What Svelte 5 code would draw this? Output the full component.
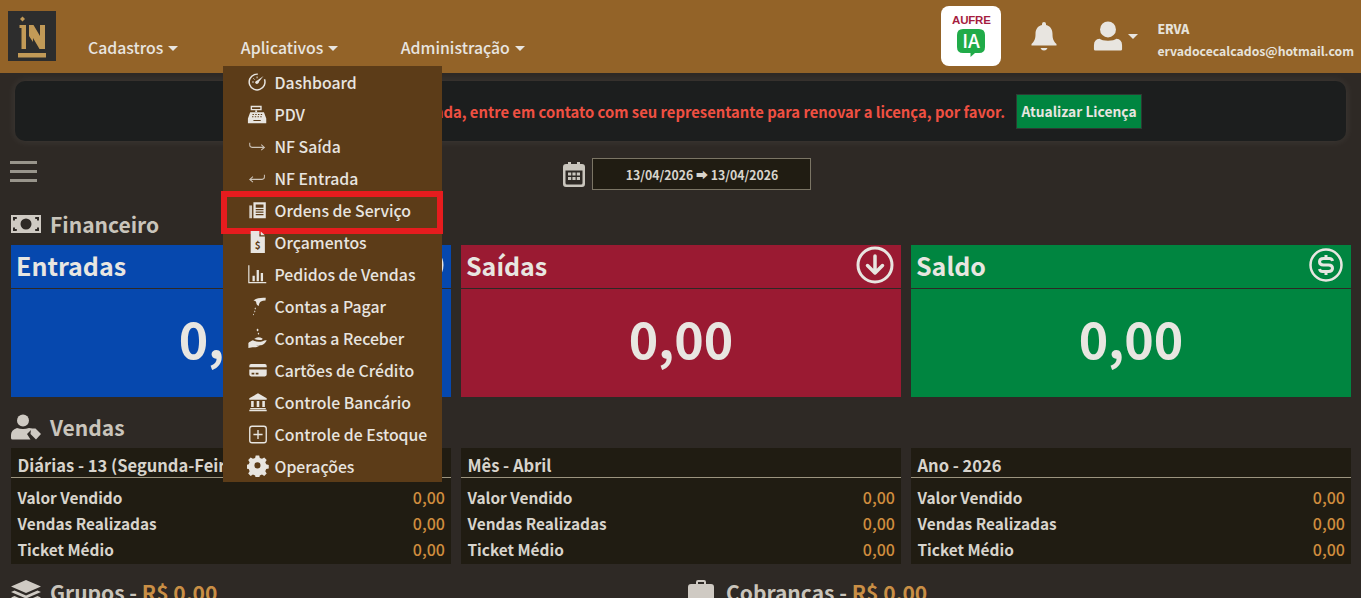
<script>
	const nav = ['Cadastros', 'Aplicativos', 'Administração'];

	const menu = [
		{ label: 'Dashboard', icon: '<circle cx="11" cy="12" r="8.6" fill="none" stroke="currentColor" stroke-width="1.6" stroke-dasharray="44 10" transform="rotate(-20 11 12)"/><path d="M10 11.2 18 5.5 12 13.2Z" fill="currentColor"/><circle cx="10.8" cy="12.4" r="1.8" fill="currentColor"/><path d="M5.5 12h2M11 6v2M7 8l1.3 1.3" stroke="currentColor" stroke-width="1"/>' },
		{ label: 'PDV', icon: '<path d="M4 3h12v5H4zM5.5 4.5v2h9v-2z" fill="currentColor" fill-rule="evenodd"/><path d="M9 8h2v2H9z" fill="currentColor"/><path d="M3.5 10h15l2.500 7v5H1v-5zM6 12v1h1.500v-1zM9 12v1h1.500v-1zM12 12v1h1.500v-1zM15 12v1h1.500v-1zM5.500 14.500v1H7v-1zM8.500 14.500v1H10v-1zM11.500 14.500v1H13v-1zM14.500 14.500v1H16v-1zM7 18.500v1.200h8v-1.200z" fill="currentColor" fill-rule="evenodd"/>' },
		{ label: 'NF Saída', icon: '<path d="M3 8.500v2.500q0 2.500 2.500 2.500H19M15.500 10.500l3.500 3-3.500 3" fill="none" stroke="currentColor" stroke-width="1.100" opacity=".8"/>' },
		{ label: 'NF Entrada', icon: '<path d="M19 8.500v2.500q0 2.500-2.500 2.500H3M6.500 10.500l-3.500 3 3.500 3" fill="none" stroke="currentColor" stroke-width="1.100" opacity=".8"/>' },
		{ label: 'Ordens de Serviço', icon: '<path d="M7 3.500h13.500v17.500H7zM9.500 6v3.500h8.500V6zM9.500 11v1.300h8.500V11zM9.500 13.700V15h8.500v-1.300zM9.500 16.400v1.300h8.500v-1.300z" fill="currentColor" fill-rule="evenodd"/><path d="M2.500 7h3v14h-3z" fill="currentColor" opacity=".85"/>' },
		{ label: 'Orçamentos', icon: '<path d="M4 0h9.500v6H19.500v18H4zM15 0.500 19.500 4.500H15z" fill="currentColor"/><text x="11.700" y="20" font-size="11" font-weight="700" text-anchor="middle" fill="#5c3c18" font-family="Noto Sans CJK SC, sans-serif">$</text>' },
		{ label: 'Pedidos de Vendas', icon: '<path d="M2 2.500v19h19" fill="none" stroke="currentColor" stroke-width="1.300"/><path d="M6 14h2.500v6H6zM10.500 7.500H13V20h-2.500zM15 11h2.500v9H15z" fill="currentColor"/>' },
		{ label: 'Contas a Pagar', icon: '<path d="M7 6c3-2.500 8-3.500 13.500-3l-.3 3c-2 .1-3.700.5-5 1.200-1.600 1-2 2.800-2.400 4.800-1.300-.4-2.300-1.500-2.600-3-.2-1.200-.5-2.600-3.200-3z" fill="currentColor"/><path d="M9 13.500q1.300 1.200 0 2.200-1.300-1 0-2.200zM8.500 17q1.100 1 0 2-1.100-1 0-2zM7 20.500q1 .8 0 1.700-1-.9 0-1.700z" fill="currentColor"/>' },
		{ label: 'Contas a Receber', icon: '<path d="M11.500 1.500l1.300 1.800-1.300 1.700-1.200-1.700zM12.500 6l.9 1.300-.9 1.200-.9-1.200z" fill="currentColor"/><path d="M8 13q3.500-3.500 9-.5l-.5 1.300q-4 1.200-8.500-.8z" fill="currentColor"/><path d="M6.500 14.500c3 1.800 7 2.200 10.500 1 1.700-.6 3-1.200 4.500-.8-1.500 3-3.800 4.800-6 5.300H10c1 .4 2.800.4 4 0-1 1.200-3 2-4.500 2H6L1.500 23v-5.500c1.500-1.500 3-2.200 5-3z" fill="currentColor"/>' },
		{ label: 'Cartões de Crédito', icon: '<path d="M4.500 5.500h15q2 0 2 2v1.500h-19v-1.500q0-2 2-2zM2.500 11.500h19v5.500q0 2-2 2h-15q-2 0-2-2zM5 15v1.800h3V15zM9.500 15v1.800h3V15z" fill="currentColor" fill-rule="evenodd"/>' },
		{ label: 'Controle Bancário', icon: '<path d="M12 2.500 21.500 8v1.500h-19V8zM4.500 11h2.800v6.500H4.500zM10.600 11h2.800v6.500h-2.800zM16.700 11h2.800v6.500h-2.800zM3.500 18.500h17V20h-17zM2.500 20.500h19V22h-19z" fill="currentColor"/>' },
		{ label: 'Controle de Estoque', icon: '<rect x="3" y="3.500" width="18" height="18" rx="2.500" fill="none" stroke="currentColor" stroke-width="1.500"/><path d="M12 7.500v10M7 12.500h10" stroke="currentColor" stroke-width="1.500"/>' },
		{ label: 'Operações', icon: '<path d="M10 1.500h4l.7 3 2.500 1 2.600-1.600 2.800 2.800-1.600 2.600 1 2.500 3 .7v4l-3 .7-1 2.500 1.600 2.600-2.800 2.800-2.600-1.600-2.500 1-.7 3h-4l-.7-3-2.500-1-2.600 1.600-2.800-2.800 1.600-2.600-1-2.500-3-.7v-4l3-.7 1-2.500-1.600-2.600 2.800-2.800 2.600 1.600 2.500-1zM12 9.500a3.500 3.500 0 1 0 0 7 3.500 3.500 0 0 0 0-7z" fill="currentColor" fill-rule="evenodd" transform="translate(0 -1) scale(.95)"/>' }
	];

	const cards = [
		{ title: 'Entradas', color: 'blue', icon: 'up' },
		{ title: 'Saídas', color: 'red', icon: 'down' },
		{ title: 'Saldo', color: 'green', icon: 'money' }
	];

	const periods = ['Diárias - 13 (Segunda-Feira)', 'Mês - Abril', 'Ano - 2026'];
	const rows = ['Valor Vendido', 'Vendas Realizadas', 'Ticket Médio'];
</script>

<div class="page">
	<header class="topbar">
		<div class="logo">
			<svg viewBox="0 0 48 50" width="48" height="50">
				<path d="M14.500 5.500 17 8l-2.500 2.500L12 8z" fill="#c29a57" />
				<path d="M11.500 14H18v24h-4.500V17h-2z" fill="#c29a57" />
				<path d="M21 14h4.500L32 25V14h5v24h-5.500L25 27v4l-4-6z" fill="#c29a57" />
				<path d="M10 42h28v4.500H10z" fill="#c29a57" />
			</svg>
		</div>
		<nav class="nav">
			{#each nav as item}
				<span class="nav-item">{item}<i class="caret"></i></span>
			{/each}
		</nav>
		<div class="tools">
			<div class="aufre">
				<span class="aufre-name">AUFRE</span>
				<svg viewBox="0 0 28 28" width="28" height="28">
					<path d="M6 0h16q6 0 6 6v12q0 6-6 6h-4l-4.500 4v-4H6q-6 0-6-6V6q0-6 6-6z" fill="#20ab49" />
					<text x="14" y="18.500" font-size="19" font-weight="500" text-anchor="middle" fill="#fff" font-family="Noto Sans CJK SC, sans-serif">IA</text>
				</svg>
			</div>
			<svg class="bell" viewBox="0 0 26 30" width="26" height="30">
				<path d="M13 1q2 0 2 2v1c4.500 1 6.500 4.500 6.500 9 0 5 1 7 4 10v1.500H.5V23c3-3 4-5 4-10 0-4.500 2-8 6.500-9V3q0-2 2-2zM9.500 27h7q-1 2.500-3.500 2.500T9.500 27z" fill="#e8e5e0" />
			</svg>
			<div class="user">
				<svg viewBox="0 0 32 32" width="32" height="30">
					<circle cx="16" cy="9" r="8.500" fill="#e8e5e0" />
					<path d="M7 19q2.500 2 9 2t9-2q6 .5 6 7v4q0 1.500-1.500 1.500h-27Q1 31.500 1 30v-4q0-6.500 6-7z" fill="#e8e5e0" />
				</svg>
				<i class="caret"></i>
			</div>
			<div class="account">
				<strong>ERVA</strong>
				<span>ervadocecalcados@hotmail.com</span>
			</div>
		</div>
	</header>

	<div class="banner-wrap">
		<div class="banner">
			<span class="warning">Sua licença está expirada, entre em contato com seu representante para renovar a licença, por favor.</span>
			<button class="renew">Atualizar Licença</button>
		</div>
	</div>

	<div class="filters">
		<div class="burger"><i></i><i></i><i></i></div>
		<div class="dates">
			<svg viewBox="0 0 22 26" width="22" height="26">
				<path d="M3 3h2V1h3v2h6V1h3v2h2q3 0 3 3v17q0 3-3 3H3q-3 0-3-3V6q0-3 3-3zM2.500 9.500V22q0 1.500 1.500 1.500h14q1.500 0 1.500-1.500V9.500z" fill="#c9c5bd" fill-rule="evenodd" />
				<path d="M5 11.500h3.200v3H5zM9.400 11.500h3.200v3H9.400zM13.800 11.500H17v3h-3.200zM5 16h3.200v3H5zM9.400 16h3.200v3H9.400zM13.800 16H17v3h-3.200z" fill="#c9c5bd" />
			</svg>
			<div class="date-box">13/04/2026 <span class="arrow">➡</span> 13/04/2026</div>
		</div>
	</div>

	<section class="section">
		<h2 class="section-title">
			<svg viewBox="0 0 30 18" width="30" height="18">
				<path d="M0 0h30v18H0zM15 3.500a5.500 5.500 0 1 0 0 11 5.500 5.500 0 0 0 0-11zM2 2v3.500h2V4h1.800V2zM24.200 2v2H26v1.500h2V2zM2 12.500V16h3.800v-2H4v-1.500zM26 12.500V14h-1.800v2H28v-3.500z" fill="#cfcac3" fill-rule="evenodd" />
			</svg>
			Financeiro
		</h2>
		<div class="grid">
			{#each cards as card}
				<div class="card {card.color}">
					<div class="card-head">
						<span>{card.title}</span>
						{#if card.icon === 'money'}
							<svg class="coin" viewBox="0 0 34 34" width="34" height="34">
								<circle cx="17" cy="17" r="15.500" fill="none" stroke="#e8e6e1" stroke-width="2.500" />
								<path d="M23.500 13q-.5-2.500-3-2.500h-6q-4 0-4 3.250t4 3.250h5q4 0 4 3.250t-4 3.250h-6q-2.500 0-3-2.500M17 7v3.500M17 23.500V27" fill="none" stroke="#e8e6e1" stroke-width="3" />
							</svg>
						{:else}
							<svg viewBox="0 0 38 38" width="38" height="38">
								<circle cx="19" cy="19" r="17" fill="none" stroke="#e8e6e1" stroke-width="3" />
								<path d="M19 10v17M11.500 19.500 19 27l7.500-7.500" fill="none" stroke="#e8e6e1" stroke-width="3.500" stroke-linecap="round" stroke-linejoin="round" />
							</svg>
						{/if}
					</div>
					<div class="card-value">0,00</div>
				</div>
			{/each}
		</div>
	</section>

	<section class="section sales">
		<h2 class="section-title">
			<svg viewBox="0 0 30 26" width="30" height="26">
				<circle cx="12" cy="6.500" r="6" fill="#cfcac3" />
				<path d="M6 14q6 2 12 0 2 0 3 1l-5 5 3.500 5.500H1.500Q0 25.500 0 24v-3q0-5 6-7z" fill="#cfcac3" />
				<path d="M20 14.500h4.500L30 20l-5 5.500-5.500-5.500z" fill="#cfcac3" />
			</svg>
			Vendas
		</h2>
		<div class="grid">
			{#each periods as period}
				<div class="panel">
					<div class="panel-head">{period}</div>
					<div class="panel-body">
						{#each rows as row}
							<div class="row"><span>{row}</span><em>0,00</em></div>
						{/each}
					</div>
				</div>
			{/each}
		</div>
	</section>

	<section class="totals">
		<h2 class="section-title">
			<svg viewBox="0 0 30 24" width="30" height="24">
				<path d="M15 0 30 6.500 15 13 0 6.500z" fill="#cfcac3" />
				<path d="M3.500 10.500 15 15.500l11.500-5L30 12 15 18.500 0 12zM3.500 16 15 21l11.500-5L30 17.500 15 24 0 17.500z" fill="#cfcac3" />
			</svg>
			<span>Grupos - <b>R$ 0,00</b></span>
		</h2>
		<h2 class="section-title charge">
			<svg viewBox="0 0 26 24" width="26" height="24">
				<path d="M8 4V2q0-2 2-2h6q2 0 2 2v2h5q3 0 3 3v14q0 3-3 3H3q-3 0-3-3V7q0-3 3-3zM10 2v2h6V2z" fill="#cfcac3" fill-rule="evenodd" />
			</svg>
			<span>Cobranças - <b>R$ 0,00</b></span>
		</h2>
	</section>

	<ul class="dropdown">
		{#each menu as entry}
			<li class:marked={entry.label === 'Ordens de Serviço'}>
				<svg viewBox="0 0 24 24" width="22" height="22">{@html entry.icon}</svg>
				{entry.label}
			</li>
		{/each}
	</ul>
</div>

<style>
	:global(body) {
		margin: 0;
		background: #2e2925;
	}

	.page {
		position: relative;
		height: 598px;
		overflow: hidden;
		background: #2e2925;
		color: #e8e5e0;
		font-family: 'Noto Sans CJK SC', 'Noto Sans', sans-serif;
	}

	.topbar {
		display: flex;
		align-items: flex-start;
		height: 73px;
		padding: 11px 7px 0 8px;
		box-sizing: border-box;
		background: #936328;
	}

	.logo {
		width: 48px;
		height: 50px;
		background: #2d2d2d;
	}

	.nav {
		display: flex;
		gap: 62.500px;
		margin: 25px 0 0 32px;
		font-size: 15.800px;
		font-weight: 500;
		line-height: 24px;
	}

	.caret {
		display: inline-block;
		margin-left: 5px;
		vertical-align: 3px;
		border: 5px solid transparent;
		border-top-color: #e8e5e0;
		border-bottom: 0;
	}

	.tools {
		display: flex;
		align-items: center;
		margin: -5px 0 0 auto;
	}

	.aufre {
		display: flex;
		flex-direction: column;
		align-items: center;
		width: 60px;
		height: 60px;
		box-sizing: border-box;
		padding-top: 7px;
		border-radius: 8px;
		background: #fff;
	}

	.aufre-name {
		margin-bottom: 2px;
		font: 700 11.500px/14px 'Liberation Sans', sans-serif;
		letter-spacing: -0.2px;
		color: #a51d3f;
	}

	.bell {
		margin-left: 30px;
	}

	.user {
		display: flex;
		align-items: center;
		margin-left: 35px;
	}

	.user .caret {
		margin: 0 0 0 4px;
	}

	.account {
		display: flex;
		flex-direction: column;
		gap: 5px;
		margin: 9px 0 0 19px;
		font-size: 12.250px;
		line-height: 17px;
		font-weight: 600;
		color: #e6e2da;
	}

	.banner-wrap {
		padding: 8px 15px 0;
	}

	.banner {
		display: flex;
		align-items: center;
		justify-content: flex-end;
		height: 60px;
		box-sizing: border-box;
		padding-right: 204px;
		border-radius: 10px;
		background: #1c1e1e;
		box-shadow: 0 0 10px rgba(255, 255, 255, 0.09);
	}

	.warning {
		font-size: 14.800px;
		font-weight: 600;
		color: #ef5042;
		white-space: nowrap;
	}

	.renew {
		width: 126px;
		height: 35px;
		margin-left: 11px;
		padding: 0;
		border: 1px solid #2e3a33;
		background: #008540;
		color: #e8e5e0;
		font: 600 13.800px 'Noto Sans CJK SC', sans-serif;
		white-space: nowrap;
	}

	.filters {
		position: relative;
		display: flex;
		justify-content: center;
		margin-top: 17px;
		height: 32px;
		padding-left: 12px;
	}

	.burger {
		position: absolute;
		left: 10px;
		top: 3px;
		display: flex;
		flex-direction: column;
		gap: 6px;
	}

	.burger i {
		display: block;
		width: 27px;
		height: 3px;
		background: #98948b;
	}

	.dates {
		display: flex;
		align-items: center;
		gap: 7px;
	}

	.date-box {
		width: 219px;
		height: 32px;
		box-sizing: border-box;
		padding-left: 2px;
		border: 1px solid #7b7565;
		background: #201c12;
		font-size: 12.300px;
		font-weight: 600;
		line-height: 32px;
		text-align: center;
		color: #d8d4cc;
	}

	.arrow {
		font-size: 12px;
	}

	.section {
		padding: 0 10px 0 11px;
	}

	.section-title {
		display: flex;
		align-items: center;
		gap: 9px;
		height: 32px;
		margin: 18px 0 5px;
		font-size: 21px;
		font-weight: 600;
		line-height: 32px;
		color: #c9c4bb;
	}

	.section-title b {
		font-weight: 600;
		color: #c98f45;
	}

	.grid {
		display: grid;
		grid-template-columns: repeat(3, 1fr);
		gap: 10px;
	}

	.card {
		height: 152px;
		color: #e8e6e1;
	}

	.card.blue {
		background: #0648ae;
	}

	.card.red {
		background: #9a1a32;
	}

	.card.green {
		background: #008540;
	}

	.card-head {
		display: flex;
		align-items: center;
		justify-content: space-between;
		height: 44px;
		box-sizing: border-box;
		padding: 0 7px 3px 5px;
		border-bottom: 1px solid #2e2925;
		font-size: 25px;
		font-weight: 600;
	}

	.coin {
		margin-right: 1px;
	}

	.card-value {
		margin-top: 15px;
		font-size: 50px;
		font-weight: 600;
		line-height: 66px;
		text-align: center;
	}

	.sales .section-title {
		margin: 14px 0 5px;
	}

	.panel {
		height: 116px;
		background: #201c12;
	}

	.panel-head {
		height: 30px;
		box-sizing: border-box;
		padding: 5px 6.500px 0;
		border-bottom: 1px solid #9c947f;
		font-size: 16.500px;
		font-weight: 600;
		line-height: 24px;
		color: #d8d4cc;
		white-space: nowrap;
		overflow: hidden;
	}

	.panel-body {
		padding: 6px 6px 0 6.500px;
	}

	.row {
		display: flex;
		justify-content: space-between;
		height: 26px;
		font-size: 15.400px;
		font-weight: 600;
		line-height: 26px;
		color: #d8d4cc;
	}

	.row em {
		font-style: normal;
		font-size: 16px;
		font-weight: 500;
		color: #cf8d3e;
	}

	.totals {
		display: grid;
		grid-template-columns: 677px 1fr;
		padding-left: 11px;
		margin-top: 12px;
	}

	.totals .section-title {
		margin: 0;
	}

	.section-title.charge {
		gap: 12px;
	}

	.dropdown {
		position: absolute;
		left: 223px;
		top: 66px;
		width: 219px;
		margin: 0;
		padding: 0;
		list-style: none;
		background: #5c3c18;
		height: 416px;
		box-sizing: border-box;
	}

	.dropdown li {
		position: relative;
		display: flex;
		align-items: center;
		gap: 6px;
		height: 32px;
		padding-left: 23.500px;
		font-size: 15.800px;
		font-weight: 500;
		color: #e8e5e0;
	}

	.dropdown li.marked::after {
		content: '';
		position: absolute;
		left: -2px;
		right: -1px;
		top: -3px;
		bottom: -8px;
		border: 6px solid #e61c1e;
	}
</style>
